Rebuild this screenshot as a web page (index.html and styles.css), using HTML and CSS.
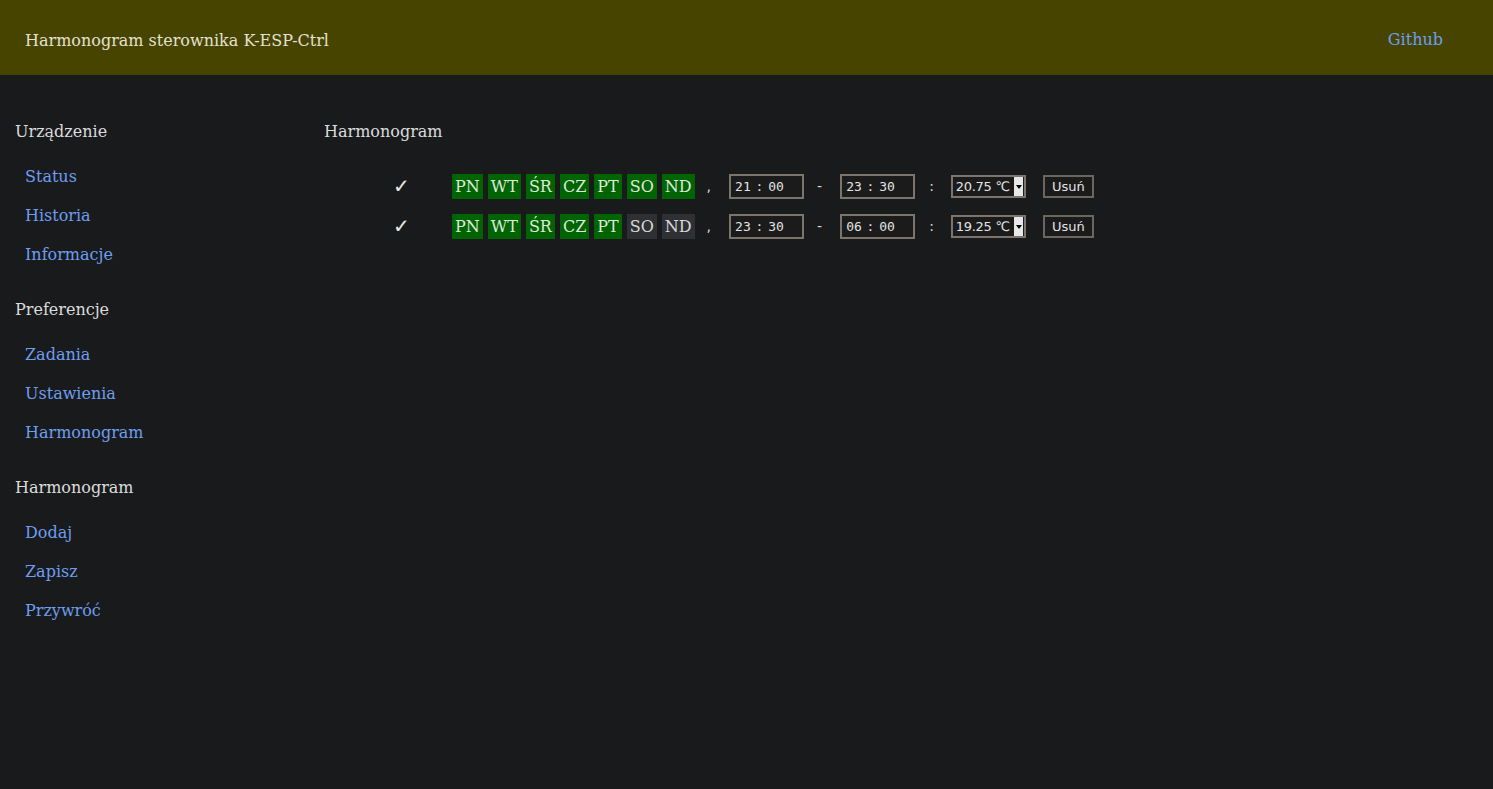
FILE: index.html
```html
<!DOCTYPE html>
<html lang="pl">
<head>
<meta charset="utf-8">
<title>Harmonogram sterownika K-ESP-Ctrl</title>
<link rel="stylesheet" href="styles.css">
</head>
<body>
<header class="topbar">
  <div class="title">Harmonogram sterownika K-ESP-Ctrl</div>
  <a class="toplink" href="#">Github</a>
</header>
<div class="layout">
  <nav class="sidebar">
    <div class="group">
      <div class="group-title">Urządzenie</div>
      <a class="nav-item" href="#">Status</a>
      <a class="nav-item" href="#">Historia</a>
      <a class="nav-item" href="#">Informacje</a>
    </div>
    <div class="group">
      <div class="group-title">Preferencje</div>
      <a class="nav-item" href="#">Zadania</a>
      <a class="nav-item" href="#">Ustawienia</a>
      <a class="nav-item" href="#">Harmonogram</a>
    </div>
    <div class="group">
      <div class="group-title">Harmonogram</div>
      <a class="nav-item" href="#">Dodaj</a>
      <a class="nav-item" href="#">Zapisz</a>
      <a class="nav-item" href="#">Przywróć</a>
    </div>
  </nav>
  <main class="content">
    <div class="content-title">Harmonogram</div>
    <div class="rows">
      <div class="row">
        <span class="check">✓</span>
        <div class="days">
          <span class="day on">PN</span>
          <span class="day on">WT</span>
          <span class="day on">ŚR</span>
          <span class="day on">CZ</span>
          <span class="day on">PT</span>
          <span class="day on">SO</span>
          <span class="day on">ND</span>
        </div>
        <span class="sep comma">,</span>
        <span class="time">21 : 00</span>
        <span class="sep dash">-</span>
        <span class="time">23 : 30</span>
        <span class="sep colon">:</span>
        <span class="select"><span class="select-text">20.75 ℃</span><span class="arrow"></span></span>
        <span class="btn">Usuń</span>
      </div>
      <div class="row">
        <span class="check">✓</span>
        <div class="days">
          <span class="day on">PN</span>
          <span class="day on">WT</span>
          <span class="day on">ŚR</span>
          <span class="day on">CZ</span>
          <span class="day on">PT</span>
          <span class="day">SO</span>
          <span class="day">ND</span>
        </div>
        <span class="sep comma">,</span>
        <span class="time">23 : 30</span>
        <span class="sep dash">-</span>
        <span class="time">06 : 00</span>
        <span class="sep colon">:</span>
        <span class="select"><span class="select-text">19.25 ℃</span><span class="arrow"></span></span>
        <span class="btn">Usuń</span>
      </div>
    </div>
  </main>
</div>
</body>
</html>
```
FILE: styles.css
```css
html, body {
  margin: 0;
  padding: 0;
  background: #191a1c;
  color: #dcdcdc;
  font-family: "DejaVu Serif", serif;
  font-size: 16px;
}
a { text-decoration: none; color: #6d9ef0; }

.topbar {
  height: 75px;
  background: #474400;
  display: flex;
  align-items: center;
  justify-content: space-between;
  padding: 6px 50px 0 25px;
  box-sizing: border-box;
}
.title { color: #e4e0d0; }
.toplink { margin-top: -2px; }

.layout {
  display: flex;
  padding-top: 45px;
}
.sidebar {
  width: 309px;
  padding-left: 15px;
  flex: none;
}
.group { margin-bottom: 24px; display: flex; flex-direction: column; }
.group-title {
  line-height: 24px;
  margin-bottom: 13px;
  color: #dcdcdc;
}
.nav-item {
  line-height: 39px;
  padding-left: 10px;
}

.content { flex: 1; }
.content-title { line-height: 24px; }
.rows { margin-top: 22px; }
.row {
  height: 40px;
  display: flex;
  align-items: center;
}
.check {
  font-family: "DejaVu Sans", sans-serif;
  font-size: 20px;
  margin-left: 69px;
  width: 16px;
  color: #e8e8e8;
}
.days {
  display: flex;
  gap: 5px;
  margin-left: 43px;
}
.day {
  height: 25px;
  line-height: 25px;
  padding: 0 3px;
  background: #2e3033;
  color: #d8d8d8;
}
.day.on { background: #006400; color: #dce8dc; }

.sep { font-family: "DejaVu Sans", sans-serif; font-size: 14px; }
.comma { margin: 0 18px 0 12px; }
.dash { margin: 0 18px 0 13px; }
.colon { margin: 0 17px 0 14px; }

.time {
  width: 75px;
  height: 25px;
  box-sizing: border-box;
  border: 2px solid #7b756b;
  background: #1b1b1b;
  font-family: "DejaVu Sans Mono", monospace;
  font-size: 13px;
  line-height: 21px;
  padding-left: 4px;
  word-spacing: -3px;
  color: #e4e4e4;
}
.select {
  width: 75px;
  height: 23px;
  box-sizing: border-box;
  border: 2px solid #7b756b;
  background: #1b1b1b;
  display: flex;
  align-items: stretch;
  font-family: "DejaVu Sans", sans-serif;
  font-size: 13px;
  color: #e4e4e4;
}
.select-text { flex: 1; line-height: 19px; padding-left: 3px; white-space: nowrap; letter-spacing: -0.3px; }
.arrow {
  width: 9px;
  margin: 0 1px 0 0;
  background: #e8e8e8;
  position: relative;
}
.arrow::after {
  content: "";
  position: absolute;
  left: 2px;
  top: 8px;
  border-left: 3px solid transparent;
  border-right: 3px solid transparent;
  border-top: 4px solid #000;
}
.btn {
  margin-left: 17px;
  width: 51px;
  height: 23px;
  box-sizing: border-box;
  border: 2px solid #6b675f;
  background: #1b1b1b;
  font-family: "DejaVu Sans", sans-serif;
  font-size: 13px;
  line-height: 19px;
  text-align: center;
  color: #e4e4e4;
}
```
